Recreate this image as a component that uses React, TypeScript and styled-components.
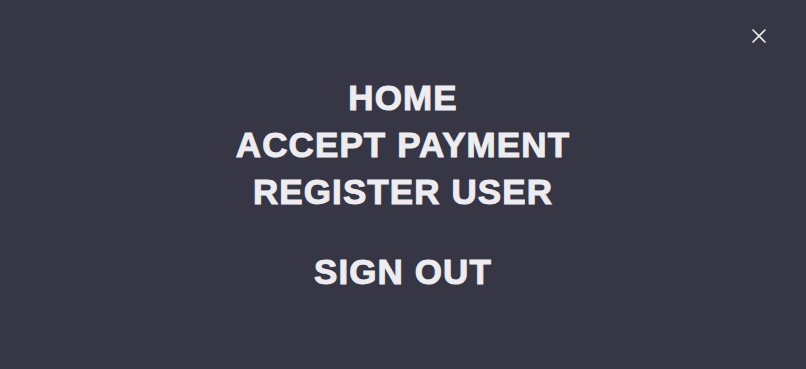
import React from 'react';
import styled, { createGlobalStyle } from 'styled-components';

const GlobalStyle = createGlobalStyle`
  html, body {
    margin: 0;
    padding: 0;
    background: #363645;
  }
`;

const Overlay = styled.div`
  position: relative;
  width: 100%;
  height: 369px;
  background-color: #363645;
  display: flex;
  flex-direction: column;
  align-items: center;
  padding-top: 74px;
  box-sizing: border-box;
  font-family: "Liberation Sans", Arial, sans-serif;
`;

const CloseBtn = styled.button`
  position: absolute;
  top: 27px;
  right: 38px;
  width: 18px;
  height: 18px;
  padding: 0;
  border: none;
  background: transparent;
  cursor: pointer;
  display: flex;
  align-items: center;
  justify-content: center;
`;

const MenuList = styled.ul`
  list-style: none;
  margin: 0;
  padding: 0;
  display: flex;
  flex-direction: column;
  align-items: center;
`;

const MenuItem = styled.li<{ $gap?: number }>`
  margin-top: ${p => p.$gap ?? 0}px;
`;

const MenuLink = styled.a`
  display: block;
  color: #ededf1;
  text-decoration: none;
  font-size: 35px;
  font-weight: 700;
  line-height: 47px;
  letter-spacing: 1.1px;
  -webkit-text-stroke: 1px #ededf1;
  white-space: nowrap;
`;

const links = ['HOME', 'ACCEPT PAYMENT', 'REGISTER USER'];

const App = () => {
  return (
    <>
      <GlobalStyle />
      <Overlay>
        <CloseBtn aria-label="Close menu">
          <svg width="14" height="14" viewBox="0 0 14 14">
            <path d="M1 1 L13 13 M13 1 L1 13" stroke="#ededf1" strokeWidth="1.6" strokeLinecap="round" />
          </svg>
        </CloseBtn>
        <MenuList>
          {links.map(l => (
            <MenuItem key={l}>
              <MenuLink href="#">{l}</MenuLink>
            </MenuItem>
          ))}
          <MenuItem $gap={33}>
            <MenuLink href="#">SIGN OUT</MenuLink>
          </MenuItem>
        </MenuList>
      </Overlay>
    </>
  );
};

export default App;
